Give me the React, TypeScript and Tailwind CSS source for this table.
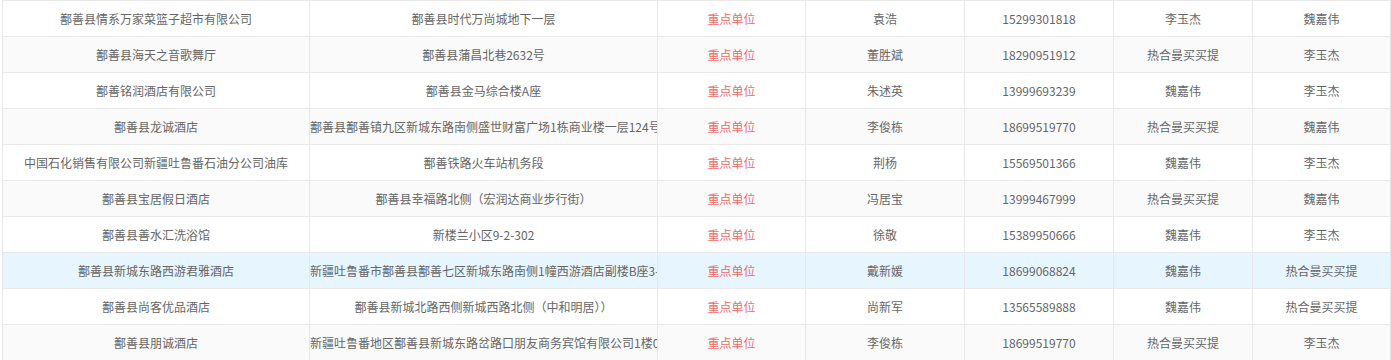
import React from "react";

type Row = [string, string, string, string, string, string, string];

const rows: Row[] = [
  ["鄯善县情系万家菜篮子超市有限公司", "鄯善县时代万尚城地下一层", "重点单位", "袁浩", "15299301818", "李玉杰", "魏嘉伟"],
  ["鄯善县海天之音歌舞厅", "鄯善县蒲昌北巷2632号", "重点单位", "董胜斌", "18290951912", "热合曼买买提", "李玉杰"],
  ["鄯善铭润酒店有限公司", "鄯善县金马综合楼A座", "重点单位", "朱述英", "13999693239", "魏嘉伟", "李玉杰"],
  ["鄯善县龙诚酒店", "鄯善县鄯善镇九区新城东路南侧盛世财富广场1栋商业楼一层124号", "重点单位", "李俊栋", "18699519770", "热合曼买买提", "魏嘉伟"],
  ["中国石化销售有限公司新疆吐鲁番石油分公司油库", "鄯善铁路火车站机务段", "重点单位", "荆杨", "15569501366", "魏嘉伟", "李玉杰"],
  ["鄯善县宝居假日酒店", "鄯善县幸福路北侧（宏润达商业步行街）", "重点单位", "冯居宝", "13999467999", "热合曼买买提", "魏嘉伟"],
  ["鄯善县善水汇洗浴馆", "新楼兰小区9-2-302", "重点单位", "徐敬", "15389950666", "魏嘉伟", "李玉杰"],
  ["鄯善县新城东路西游君雅酒店", "新疆吐鲁番市鄯善县鄯善七区新城东路南侧1幢西游酒店副楼B座3-1号", "重点单位", "戴新媛", "18699068824", "魏嘉伟", "热合曼买买提"],
  ["鄯善县尚客优品酒店", "鄯善县新城北路西侧新城西路北侧（中和明居））", "重点单位", "尚新军", "13565589888", "魏嘉伟", "热合曼买买提"],
  ["鄯善县朋诚酒店", "新疆吐鲁番地区鄯善县新城东路岔路口朋友商务宾馆有限公司1楼01号", "重点单位", "李俊栋", "18699519770", "热合曼买买提", "李玉杰"],
];

const widths = ["w-[307px]", "w-[348px]", "w-[148px]", "w-[159px]", "w-[149px]", "w-[139px]", "flex-1"];

export default function App() {
  return (
    <div
      className="w-[1391px] h-[360px] overflow-hidden bg-white pl-[2px] text-[12px] text-[#666666]"
      style={{ fontFamily: '"Noto Sans CJK SC", "Noto Sans", sans-serif' }}
    >
      <div className="border-l border-t border-[#e8e8e8]">
        {rows.map((r, i) => {
          const bg = i === 7 ? "bg-[#e6f5fe]" : i % 2 === 1 ? "bg-[#fafafa]" : "bg-white";
          return (
            <div key={i} className={`flex h-[36px] border-b border-[#e8e8e8] ${bg}`}>
              {r.map((c, j) => (
                <div
                  key={j}
                  className={`${widths[j]} shrink-0 flex items-center border-r border-[#e8e8e8] overflow-hidden`}
                >
                  <div
                    className={`w-full whitespace-nowrap overflow-hidden text-center leading-[35px] ${
                      j === 2 ? "text-[#ef6b6b]" : ""
                    }`}
                  >
                    {c}
                  </div>
                </div>
              ))}
            </div>
          );
        })}
      </div>
    </div>
  );
}
